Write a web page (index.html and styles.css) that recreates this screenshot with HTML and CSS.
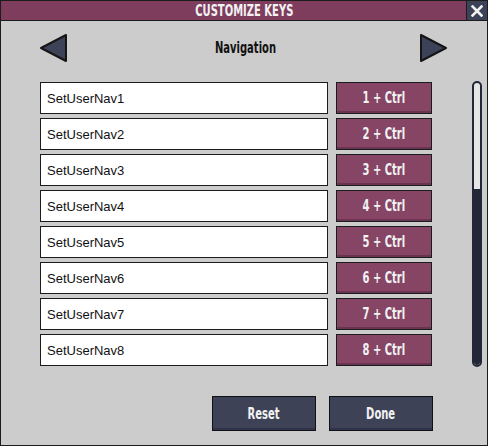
FILE: index.html
```html
<!DOCTYPE html>
<html lang="en">
<head>
    <meta charset="UTF-8">
    <meta name="viewport" content="width=device-width, initial-scale=1.0">
    <title>Customize Keys</title>
    <link rel="stylesheet" href="styles.css">
</head>
<body>
    <div class="window">
        <div class="title-bar">
            <span class="title narrow">CUSTOMIZE KEYS</span>
            <button class="close">
                <svg width="12" height="12" viewBox="0 0 12 12">
                    <path d="M1.5 1.5 L10.5 10.5 M10.5 1.5 L1.5 10.5" stroke="#f2f2f2" stroke-width="2.6" stroke-linecap="square"/>
                </svg>
            </button>
        </div>
        <div class="content">
            <div class="nav-row">
                <svg class="arrow" width="28" height="28" viewBox="0 0 28 28">
                    <polygon points="26,1 26,27 1,14" fill="#3c4258" stroke="#151515" stroke-width="2" stroke-linejoin="round"/>
                </svg>
                <span class="nav-label narrow">Navigation</span>
                <svg class="arrow" width="28" height="28" viewBox="0 0 28 28">
                    <polygon points="2,1 2,27 27,14" fill="#3c4258" stroke="#151515" stroke-width="2" stroke-linejoin="round"/>
                </svg>
            </div>
            <div class="main">
                <div class="list">
                    <div class="row"><div class="field">SetUserNav1</div><button class="key"><span class="narrow">1 + Ctrl</span></button></div>
                    <div class="row"><div class="field">SetUserNav2</div><button class="key"><span class="narrow">2 + Ctrl</span></button></div>
                    <div class="row"><div class="field">SetUserNav3</div><button class="key"><span class="narrow">3 + Ctrl</span></button></div>
                    <div class="row"><div class="field">SetUserNav4</div><button class="key"><span class="narrow">4 + Ctrl</span></button></div>
                    <div class="row"><div class="field">SetUserNav5</div><button class="key"><span class="narrow">5 + Ctrl</span></button></div>
                    <div class="row"><div class="field">SetUserNav6</div><button class="key"><span class="narrow">6 + Ctrl</span></button></div>
                    <div class="row"><div class="field">SetUserNav7</div><button class="key"><span class="narrow">7 + Ctrl</span></button></div>
                    <div class="row"><div class="field">SetUserNav8</div><button class="key"><span class="narrow">8 + Ctrl</span></button></div>
                </div>
                <div class="scrollbar"><div class="thumb"></div></div>
            </div>
            <div class="footer">
                <button class="action"><span class="narrow">Reset</span></button>
                <button class="action"><span class="narrow">Done</span></button>
            </div>
        </div>
    </div>
</body>
</html>
```

FILE: styles.css
```css
body {
    margin: 0;
    background-color: #cccccc;
}
.window {
    width: 488px;
    height: 446px;
    box-sizing: border-box;
    border: 1px solid #1c1c1c;
    background-color: #cccccc;
    display: flex;
    flex-direction: column;
}
.title-bar {
    height: 19px;
    background-color: #7f3d5d;
    border-bottom: 1px solid #1c1c1c;
    display: flex;
    align-items: center;
    justify-content: center;
    position: relative;
}
.title, .nav-label, .key, .action {
    font-family: "DejaVu Sans Condensed", "DejaVu Sans", sans-serif;
    font-weight: bold;
    color: #f2f2f2;
}
/* squeeze the glyphs to get the tall pixel-font look */
.narrow {
    display: inline-block;
    transform: scaleX(0.74);
}
.title {
    font-size: 15px;
}
.close {
    position: absolute;
    right: 0;
    top: 0;
    width: 21px;
    height: 19px;
    padding: 0;
    border: none;
    border-left: 1px solid #1c1c1c;
    background-color: #3c4258;
    display: flex;
    align-items: center;
    justify-content: center;
}
.content {
    flex: 1;
    display: flex;
    flex-direction: column;
    padding: 13px 0 0 39px;
}
.nav-row {
    width: 407px;
    height: 28px;
    display: flex;
    align-items: center;
    justify-content: space-between;
}
.arrow {
    display: block;
}
.nav-label {
    color: #111111;
    font-size: 15px;
    padding-left: 6px;
}
.main {
    display: flex;
    margin-top: 19px;
}
.list {
    display: flex;
    flex-direction: column;
    gap: 4px;
    margin-top: 1px;
}
.row {
    display: flex;
    gap: 8px;
    height: 32px;
}
.field {
    width: 288px;
    box-sizing: border-box;
    border: 1px solid #1c1c1c;
    background-color: #ffffff;
    font-family: "Liberation Sans", Arial, sans-serif;
    font-size: 13px;
    color: #111111;
    padding-left: 6px;
    display: flex;
    align-items: center;
}
.key {
    width: 96px;
    box-sizing: border-box;
    border: 1px solid #1c1c1c;
    background-color: #864565;
    box-shadow: inset 0 -2px 0 #6a3450;
    font-size: 15px;
    padding: 0;
}
.scrollbar {
    width: 10px;
    height: 286px;
    margin-left: 40px;
    box-sizing: border-box;
    border: 2px solid #232838;
    border-radius: 5px;
    background-color: #e6e6e6;
    display: flex;
    flex-direction: column;
    justify-content: flex-end;
    overflow: hidden;
}
.thumb {
    height: 176px;
    background-color: #232838;
}
.footer {
    display: flex;
    justify-content: flex-end;
    gap: 13px;
    width: 393px;
    margin-top: 29px;
}
.action {
    width: 104px;
    height: 35px;
    box-sizing: border-box;
    border: 1px solid #111111;
    background-color: #3d4257;
    box-shadow: inset 0 -2px 0 #30344a;
    font-size: 15px;
    padding: 0;
}
```
